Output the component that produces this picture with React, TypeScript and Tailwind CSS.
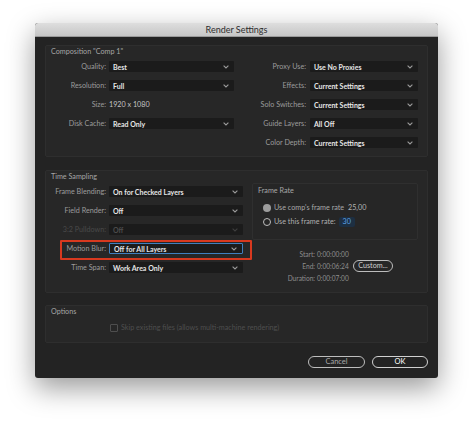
import React from "react";

const font = { fontFamily: "Lato, 'Open Sans', sans-serif" };

const Chevron = ({ color = "#9a9a9a" }: { color?: string }) => (
  <svg width="6" height="4" viewBox="0 0 6 4" className="shrink-0">
    <path d="M0.6 0.6 L3 3 L5.4 0.6" stroke={color} strokeWidth="1.1" fill="none" />
  </svg>
);

type SelectProps = {
  value: string;
  width: string;
  focus?: boolean;
  disabled?: boolean;
};

const Select = ({ value, width, focus, disabled }: SelectProps) => (
  <div
    className={`${width} h-[11px] flex items-center justify-between pl-[4px] pr-[5px] rounded-[1px] bg-[#1b1b1b] ${
      focus ? "border border-[#3f7fbf]" : ""
    }`}
  >
    <span
      className={`text-[7px] leading-[10px] font-bold ${
        disabled ? "text-[#4c4c4c]" : "text-[#e6e6e6]"
      }`}
    >
      {value}
    </span>
    <Chevron color={disabled ? "#3e3e3e" : "#9a9a9a"} />
  </div>
);

type RowProps = {
  label: string;
  labelWidth: string;
  children: React.ReactNode;
  disabled?: boolean;
  gap?: string;
};

const Row = ({ label, labelWidth, children, disabled, gap = "gap-[3px]" }: RowProps) => (
  <div className={`h-[19px] flex items-center ${gap}`}>
    <div
      className={`${labelWidth} text-right text-[7.2px] leading-[10px] ${
        disabled ? "text-[#4a4a4a]" : "text-[#9c9c9c]"
      }`}
    >
      {label}
    </div>
    {children}
  </div>
);

const GroupTitle = ({ children }: { children: React.ReactNode }) => (
  <div className="h-[11px] pl-[5px] text-[7.2px] leading-[11px] text-[#a6a6a6]">{children}</div>
);

export default function App() {
  return (
    <div className="w-[474px] h-[425px] bg-white pt-[23px] pl-[35px]" style={font}>
      <div className="w-[403px] h-[355px] bg-[#232323] rounded-[3px] overflow-hidden shadow-[0_10px_28px_rgba(0,0,0,0.4)]">
        {/* title bar */}
        <div className="h-[14px] flex items-center justify-center bg-gradient-to-b from-[#dedede] to-[#c6c6c6] border-b border-[#9a9a9a]">
          <span className="text-[9px] leading-[12px] text-[#2f2f2f]">Render Settings</span>
        </div>

        {/* composition */}
        <div className="mx-[10px] mt-[8px] h-[112px] border border-[#2e2e2e] bg-[#272727] rounded-[2px]">
          <GroupTitle>Composition "Comp 1"</GroupTitle>
          <div className="flex">
            <div className="w-[188px] flex flex-col">
              <Row label="Quality:" labelWidth="w-[60px]">
                <Select value="Best" width="w-[125px]" />
              </Row>
              <Row label="Resolution:" labelWidth="w-[60px]">
                <Select value="Full" width="w-[125px]" />
              </Row>
              <Row label="Size:" labelWidth="w-[60px]">
                <span className="text-[7.2px] leading-[10px] text-[#c4c4c4]">1920 x 1080</span>
              </Row>
              <Row label="Disk Cache:" labelWidth="w-[60px]">
                <Select value="Read Only" width="w-[125px]" />
              </Row>
            </div>
            <div className="w-[184px] flex flex-col">
              <Row label="Proxy Use:" labelWidth="w-[72px]" gap="gap-[4px]">
                <Select value="Use No Proxies" width="w-[108px]" />
              </Row>
              <Row label="Effects:" labelWidth="w-[72px]" gap="gap-[4px]">
                <Select value="Current Settings" width="w-[108px]" />
              </Row>
              <Row label="Solo Switches:" labelWidth="w-[72px]" gap="gap-[4px]">
                <Select value="Current Settings" width="w-[108px]" />
              </Row>
              <Row label="Guide Layers:" labelWidth="w-[72px]" gap="gap-[4px]">
                <Select value="All Off" width="w-[108px]" />
              </Row>
              <Row label="Color Depth:" labelWidth="w-[72px]" gap="gap-[4px]">
                <Select value="Current Settings" width="w-[108px]" />
              </Row>
            </div>
          </div>
        </div>

        {/* time sampling */}
        <div className="mx-[10px] mt-[13px] h-[123px] border border-[#2e2e2e] bg-[#272727] rounded-[2px]">
          <GroupTitle>Time Sampling</GroupTitle>
          <div className="flex">
            <div className="w-[197px] flex flex-col">
              <Row label="Frame Blending:" labelWidth="w-[60px]">
                <Select value="On for Checked Layers" width="w-[134px]" />
              </Row>
              <Row label="Field Render:" labelWidth="w-[60px]">
                <Select value="Off" width="w-[134px]" />
              </Row>
              <Row label="3:2 Pulldown:" labelWidth="w-[60px]" disabled>
                <Select value="Off" width="w-[134px]" disabled />
              </Row>
              <div className="relative">
                <Row label="Motion Blur:" labelWidth="w-[60px]">
                  <Select value="Off for All Layers" width="w-[134px]" focus />
                </Row>
                <div className="absolute left-[14px] -right-[9px] top-[1px] h-[20px] border-2 border-[#d8391f] rounded-[1px]" />
              </div>
              <Row label="Time Span:" labelWidth="w-[60px]">
                <Select value="Work Area Only" width="w-[134px]" />
              </Row>
            </div>

            <div className="ml-[9px] mt-[1px] flex flex-col">
              {/* frame rate */}
              <div className="w-[166px] h-[57px] border border-[#2f2f2f] bg-[#262626] rounded-[2px] pt-[1px]">
                <GroupTitle>Frame Rate</GroupTitle>
                <div className="mt-[5px] pl-[10px]">
                  <div className="h-[14px] flex items-center">
                    <div className="w-[8px] h-[8px] rounded-full bg-[#9d9d9d]" />
                    <span className="ml-[3px] w-[72px] text-[7.2px] leading-[10px] text-[#a8a8a8]">
                      Use comp's frame rate
                    </span>
                    <span className="ml-[2px] text-[7.2px] leading-[10px] text-[#b4b4b4]">25,00</span>
                  </div>
                  <div className="h-[14px] flex items-center">
                    <div className="w-[8px] h-[8px] rounded-full border border-[#bdbdbd]" />
                    <span className="ml-[3px] text-[7.2px] leading-[10px] text-[#b0b0b0]">
                      Use this frame rate:
                    </span>
                    <span className="ml-[3px] px-[4px] h-[10px] flex items-center rounded-[2px] bg-[#1d2f42] text-[7.2px] leading-[10px] text-[#5aa2e6]">
                      30
                    </span>
                  </div>
                </div>
              </div>

              {/* start / end / duration */}
              <div className="mt-[8px] flex flex-col text-[6.6px] leading-[10px] text-[#8e8e8e]">
                <div className="h-[12px] flex items-center">
                  <span className="w-[63px] text-right">Start:</span>
                  <span className="ml-[2px] w-[34px]">0:00:00:00</span>
                </div>
                <div className="h-[12px] flex items-center">
                  <span className="w-[63px] text-right">End:</span>
                  <span className="ml-[2px] w-[34px]">0:00:06:24</span>
                  <div className="ml-[2px] w-[40px] h-[12px] rounded-full border border-[#bdbdbd] flex items-center justify-center text-[7.2px] text-[#cfcfcf]">
                    Custom...
                  </div>
                </div>
                <div className="h-[12px] flex items-center">
                  <span className="w-[63px] text-right">Duration:</span>
                  <span className="ml-[2px] w-[34px]">0:00:07:00</span>
                </div>
              </div>
            </div>
          </div>
        </div>

        {/* options */}
        <div className="mx-[10px] mt-[12px] h-[38px] border border-[#2e2e2e] bg-[#272727] rounded-[2px]">
          <GroupTitle>Options</GroupTitle>
          <div className="mt-[4px] h-[14px] pl-[64px] flex items-center">
            <div className="w-[8px] h-[8px] border border-[#4e4e4e] rounded-[1px]" />
            <span className="ml-[3px] text-[7.2px] leading-[10px] text-[#4e4e4e]">
              Skip existing files (allows multi-machine rendering)
            </span>
          </div>
        </div>

        {/* buttons */}
        <div className="mt-[13px] pr-[10px] flex justify-end gap-[7px]">
          <div className="w-[57px] h-[12px] rounded-full border border-[#bdbdbd] flex items-center justify-center text-[7.5px] leading-[10px] text-[#a8a8a8]">
            Cancel
          </div>
          <div className="w-[56px] h-[12px] rounded-full border border-[#d0d0d0] flex items-center justify-center text-[7.5px] leading-[10px] text-white">
            OK
          </div>
        </div>
      </div>
    </div>
  );
}
